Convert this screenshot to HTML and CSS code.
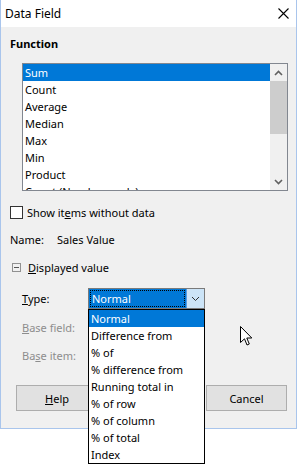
FILE: index.html
```html
<!DOCTYPE html>
<html lang="en">
  <head>
    <meta charset="UTF-8" />
    <title>Data Field</title>
    <link rel="stylesheet" href="styles.css">
  </head>
  <body>
    <div class="window">
      <div class="titlebar">
        <span class="title">Data Field</span>
        <svg class="close" width="11" height="11" viewBox="0 0 11 11">
          <path d="M0.5 0.5 L10.5 10.5 M10.5 0.5 L0.5 10.5" stroke="#000" stroke-width="1.1" fill="none" />
        </svg>
      </div>

      <div class="content">
        <div class="heading">Function</div>

        <div class="listbox">
          <div class="list-items">
            <div class="row selected">Sum</div>
            <div class="row">Count</div>
            <div class="row">Average</div>
            <div class="row">Median</div>
            <div class="row">Max</div>
            <div class="row">Min</div>
            <div class="row">Product</div>
            <div class="row">Count (Numbers only)</div>
          </div>
          <div class="scrollbar">
            <div class="arrow">
              <svg width="9" height="6" viewBox="0 0 9 6"><path d="M1 5 L4.5 1.5 L8 5" stroke="#606060" stroke-width="1.6" fill="none" /></svg>
            </div>
            <div class="thumb"></div>
            <div class="track"></div>
            <div class="arrow">
              <svg width="9" height="6" viewBox="0 0 9 6"><path d="M1 1 L4.5 4.5 L8 1" stroke="#606060" stroke-width="1.6" fill="none" /></svg>
            </div>
          </div>
        </div>

        <div class="check-row">
          <span class="checkbox"></span>
          <span>Show it<u>e</u>ms without data</span>
        </div>

        <div class="name-row">
          <span class="name-label">Name:</span>
          <span>Sales Value</span>
        </div>

        <div class="expander-row">
          <span class="expander"><span class="minus"></span></span>
          <span><u>D</u>isplayed value</span>
        </div>

        <div class="field-row">
          <span class="field-label"><u>T</u>ype:</span>
          <div class="combo">
            <div class="combo-text"><span class="focus">Normal</span></div>
            <div class="combo-button">
              <svg width="9" height="6" viewBox="0 0 9 6"><path d="M1 1 L4.5 4.5 L8 1" stroke="#333" stroke-width="1" fill="none" /></svg>
            </div>
          </div>
        </div>

        <div class="field-row disabled">
          <span class="field-label"><u>B</u>ase field:</span>
        </div>

        <div class="field-row disabled">
          <span class="field-label">Ba<u>s</u>e item:</span>
        </div>

        <div class="buttons">
          <button class="btn help"><u>H</u>elp</button>
          <button class="btn cancel">Cancel</button>
        </div>
      </div>
    </div>

    <div class="dropdown">
      <div class="drop-item selected">Normal</div>
      <div class="drop-item">Difference from</div>
      <div class="drop-item">% of</div>
      <div class="drop-item">% difference from</div>
      <div class="drop-item">Running total in</div>
      <div class="drop-item">% of row</div>
      <div class="drop-item">% of column</div>
      <div class="drop-item">% of total</div>
      <div class="drop-item">Index</div>
    </div>

    <svg class="cursor" width="13" height="21" viewBox="0 0 13 21">
      <path d="M0.5 0.5 L0.5 16.5 L4.5 12.8 L7 19 L9.3 18 L6.8 12 L11.8 12 Z" fill="#fff" stroke="#000" stroke-width="1" stroke-linejoin="miter" />
    </svg>
  </body>
</html>
```

FILE: styles.css
```css
body {
  margin: 0;
  background-color: white;
  font-family: "Noto Sans", "Open Sans", sans-serif;
  font-size: 11px;
  color: #000;
  position: relative;
  width: 297px;
  height: 465px;
  overflow: hidden;
}
.window {
  width: 297px;
  height: 429px;
  box-sizing: border-box;
  border: 1px solid #a9c5ec;
  border-top: none;
  display: flex;
  flex-direction: column;
}
.titlebar {
  height: 27px;
  flex: none;
  background-color: white;
  display: flex;
  align-items: center;
  justify-content: space-between;
  padding: 0 5px 0 4px;
}
.title {
  font-size: 12px;
}
.close {
  margin-right: 2px;
}
.content {
  flex: 1;
  background-color: #f0f0f0;
  padding: 0 0 0 9px;
}
.heading {
  font-weight: bold;
  line-height: 17px;
  margin-top: 8px;
}
.listbox {
  margin: 11px 0 0 12px;
  width: 266px;
  height: 128px;
  box-sizing: border-box;
  border: 1px solid #828790;
  background-color: white;
  display: flex;
  overflow: hidden;
}
.list-items {
  flex: 1;
}
.row {
  height: 17px;
  line-height: 17px;
  padding-left: 2px;
  white-space: nowrap;
}
.selected {
  background-color: #0078d7;
  color: white;
}
.scrollbar {
  width: 17px;
  background-color: #f0f0f0;
  display: flex;
  flex-direction: column;
}
.arrow {
  height: 17px;
  display: flex;
  align-items: center;
  justify-content: center;
}
.thumb {
  height: 53px;
  background-color: #cdcdcd;
}
.track {
  flex: 1;
}
.check-row {
  margin-top: 13px;
  height: 17px;
  display: flex;
  align-items: center;
  gap: 4px;
}
.checkbox {
  width: 13px;
  height: 13px;
  box-sizing: border-box;
  border: 1px solid #333;
  background-color: white;
}
.name-row {
  margin-top: 10px;
  height: 17px;
  line-height: 17px;
  display: flex;
}
.name-label {
  width: 47px;
}
.expander-row {
  margin-top: 11px;
  height: 17px;
  display: flex;
  align-items: center;
  padding-left: 2px;
  gap: 7px;
}
.expander {
  width: 9px;
  height: 9px;
  box-sizing: border-box;
  border: 1px solid #919191;
  display: flex;
  align-items: center;
  justify-content: center;
}
.minus {
  width: 5px;
  height: 1px;
  background-color: #555;
}
.field-row {
  display: flex;
  align-items: center;
  padding-left: 12px;
  margin-top: 12px;
  height: 21px;
}
.field-row.disabled {
  height: 17px;
  margin-top: 10px;
  color: #8d8d8d;
}
.field-row.disabled + .field-row.disabled {
  margin-top: 11px;
}
.field-label {
  width: 66px;
}
.combo {
  width: 117px;
  height: 21px;
  box-sizing: border-box;
  border: 1px solid #7a7a7a;
  display: flex;
}
.combo-text {
  flex: 1;
  background-color: #0078d7;
  color: white;
  padding: 1px;
  display: flex;
}
.focus {
  flex: 1;
  border: 1px dotted #fff;
  outline: 1px dotted #000;
  outline-offset: -1px;
  line-height: 15px;
  padding-left: 1px;
}
.combo-button {
  width: 17px;
  background-color: #cce4f7;
  border-left: 1px solid #569de5;
  display: flex;
  align-items: center;
  justify-content: center;
}
.buttons {
  margin-top: 21px;
  padding-left: 6px;
  display: flex;
  justify-content: space-between;
  width: 271px;
}
.btn {
  height: 26px;
  width: 82px;
  background-color: #e1e1e1;
  border: 1px solid #adadad;
  font-family: inherit;
  font-size: 11px;
  color: #000;
  padding: 0;
}
.cancel {
  width: 81px;
}
.dropdown {
  position: absolute;
  left: 88px;
  top: 309px;
  width: 117px;
  height: 155px;
  box-sizing: border-box;
  border: 1px solid #000;
  background-color: white;
}
.drop-item {
  height: 17px;
  line-height: 17px;
  padding-left: 2px;
  white-space: nowrap;
}
.cursor {
  position: absolute;
  left: 240px;
  top: 326px;
}
```
